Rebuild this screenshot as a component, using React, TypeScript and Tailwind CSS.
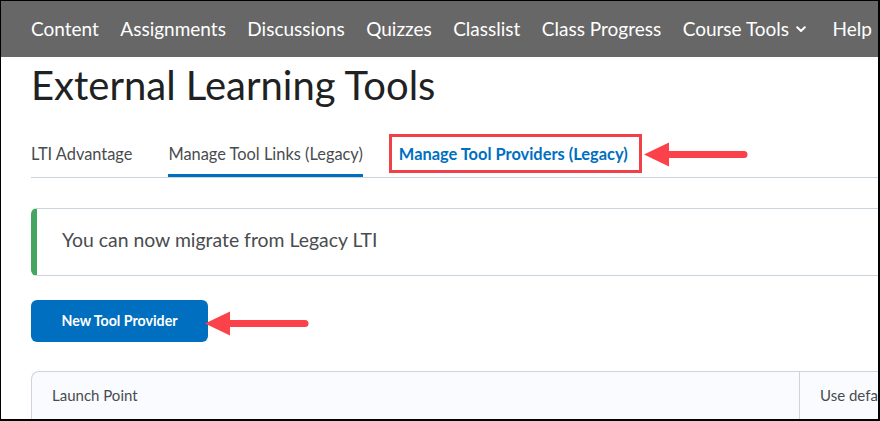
import { useState } from "react";

const navItems = ["Content", "Assignments", "Discussions", "Quizzes", "Classlist", "Class Progress"];

function Arrow({ className }: { className: string }) {
  // red callout arrow, head on the left
  return (
    <svg className={className} width="106" height="26" viewBox="0 0 106 26" aria-hidden="true">
      <polygon points="1,12.5 26,0.5 26,24.5" fill="#fb4149" />
      <line x1="20" y1="12.5" x2="101" y2="12.5" stroke="#fb4149" strokeWidth="7" strokeLinecap="round" />
    </svg>
  );
}

export default function App() {
  const [activeTab] = useState<string>("Manage Tool Links (Legacy)");
  const tabs = ["LTI Advantage", "Manage Tool Links (Legacy)", "Manage Tool Providers (Legacy)"];

  return (
    <div className="relative w-[880px] h-[421px] overflow-hidden bg-white border-t border-l border-r-2 border-b-2 border-black font-['Lato','Open_Sans',sans-serif]">
      {/* Top navbar */}
      <nav className="h-[56px] bg-[#676767] flex items-center pl-[30px] gap-[21.5px] text-white text-[19px] whitespace-nowrap">
        {navItems.map((item) => (
          <span key={item}>{item}</span>
        ))}
        <span className="flex items-center gap-[7px] mr-[5px]">
          Course Tools
          <svg width="10" height="7" viewBox="0 0 10 7" aria-hidden="true">
            <polyline points="1.2,1.2 5,5 8.8,1.2" fill="none" stroke="white" strokeWidth="2" strokeLinecap="round" strokeLinejoin="round" />
          </svg>
        </span>
        <span>Help</span>
      </nav>

      <main className="pl-[30px]">
        <h1 className="mt-[4px] text-[40px] leading-[48px] text-[#202122] whitespace-nowrap">External Learning Tools</h1>

        {/* Tabs */}
        <div className="mt-[35px] flex gap-[36px] border-b border-[#cdd5dc] text-[16.4px] leading-[20px] whitespace-nowrap">
          {tabs.map((t, i) => {
            const isActive = t === activeTab;
            const isProviders = i === 2;
            return (
              <div
                key={t}
                className={`relative pb-[10px] border-b-[3px] ${
                  isActive ? "border-[#006fbf]" : "border-transparent"
                } ${isProviders ? "text-[#006fbf] font-bold" : "text-[#494c4e]"}`}
              >
                {t}
                {isProviders && (
                  <>
                    <span className="absolute -left-[10px] -right-[14px] -top-[10px] bottom-[1px] border-[3px] border-[#f04149]" />
                    <Arrow className="absolute left-[calc(100%+15px)] -top-[2px]" />
                  </>
                )}
              </div>
            );
          })}
        </div>

        {/* Alert */}
        <div className="mt-[30px] h-[68px] flex items-center pb-[5px] border border-r-0 border-[#cdd5dc] border-l-[6px] border-l-[#46a661] rounded-l-[6px] pl-[25px]">
          <span className="text-[19.4px] text-[#494c4e] whitespace-nowrap">You can now migrate from Legacy LTI</span>
        </div>

        {/* Primary action */}
        <div className="relative mt-[24px] w-[177px]">
          <button
            type="button"
            className="w-[177px] h-[42px] rounded-[6px] bg-[#006fbf] text-white text-[14.2px] font-bold"
          >
            New Tool Provider
          </button>
          <Arrow className="absolute left-[173px] top-[11px]" />
        </div>

        {/* Table header, last column runs past the right edge */}
        <div className="mt-[29px] flex h-[60px] bg-[#f9fbff] border border-r-0 border-[#cdd5dc] rounded-tl-[8px] text-[15px] leading-[20px] text-[#494c4e] whitespace-nowrap">
          <div className="w-[768px] shrink-0 pl-[20px] pt-[13px] border-r border-[#cdd5dc]">Launch Point</div>
          <div className="pl-[20px] pt-[13px] overflow-hidden">Use default</div>
        </div>
      </main>
    </div>
  );
}
